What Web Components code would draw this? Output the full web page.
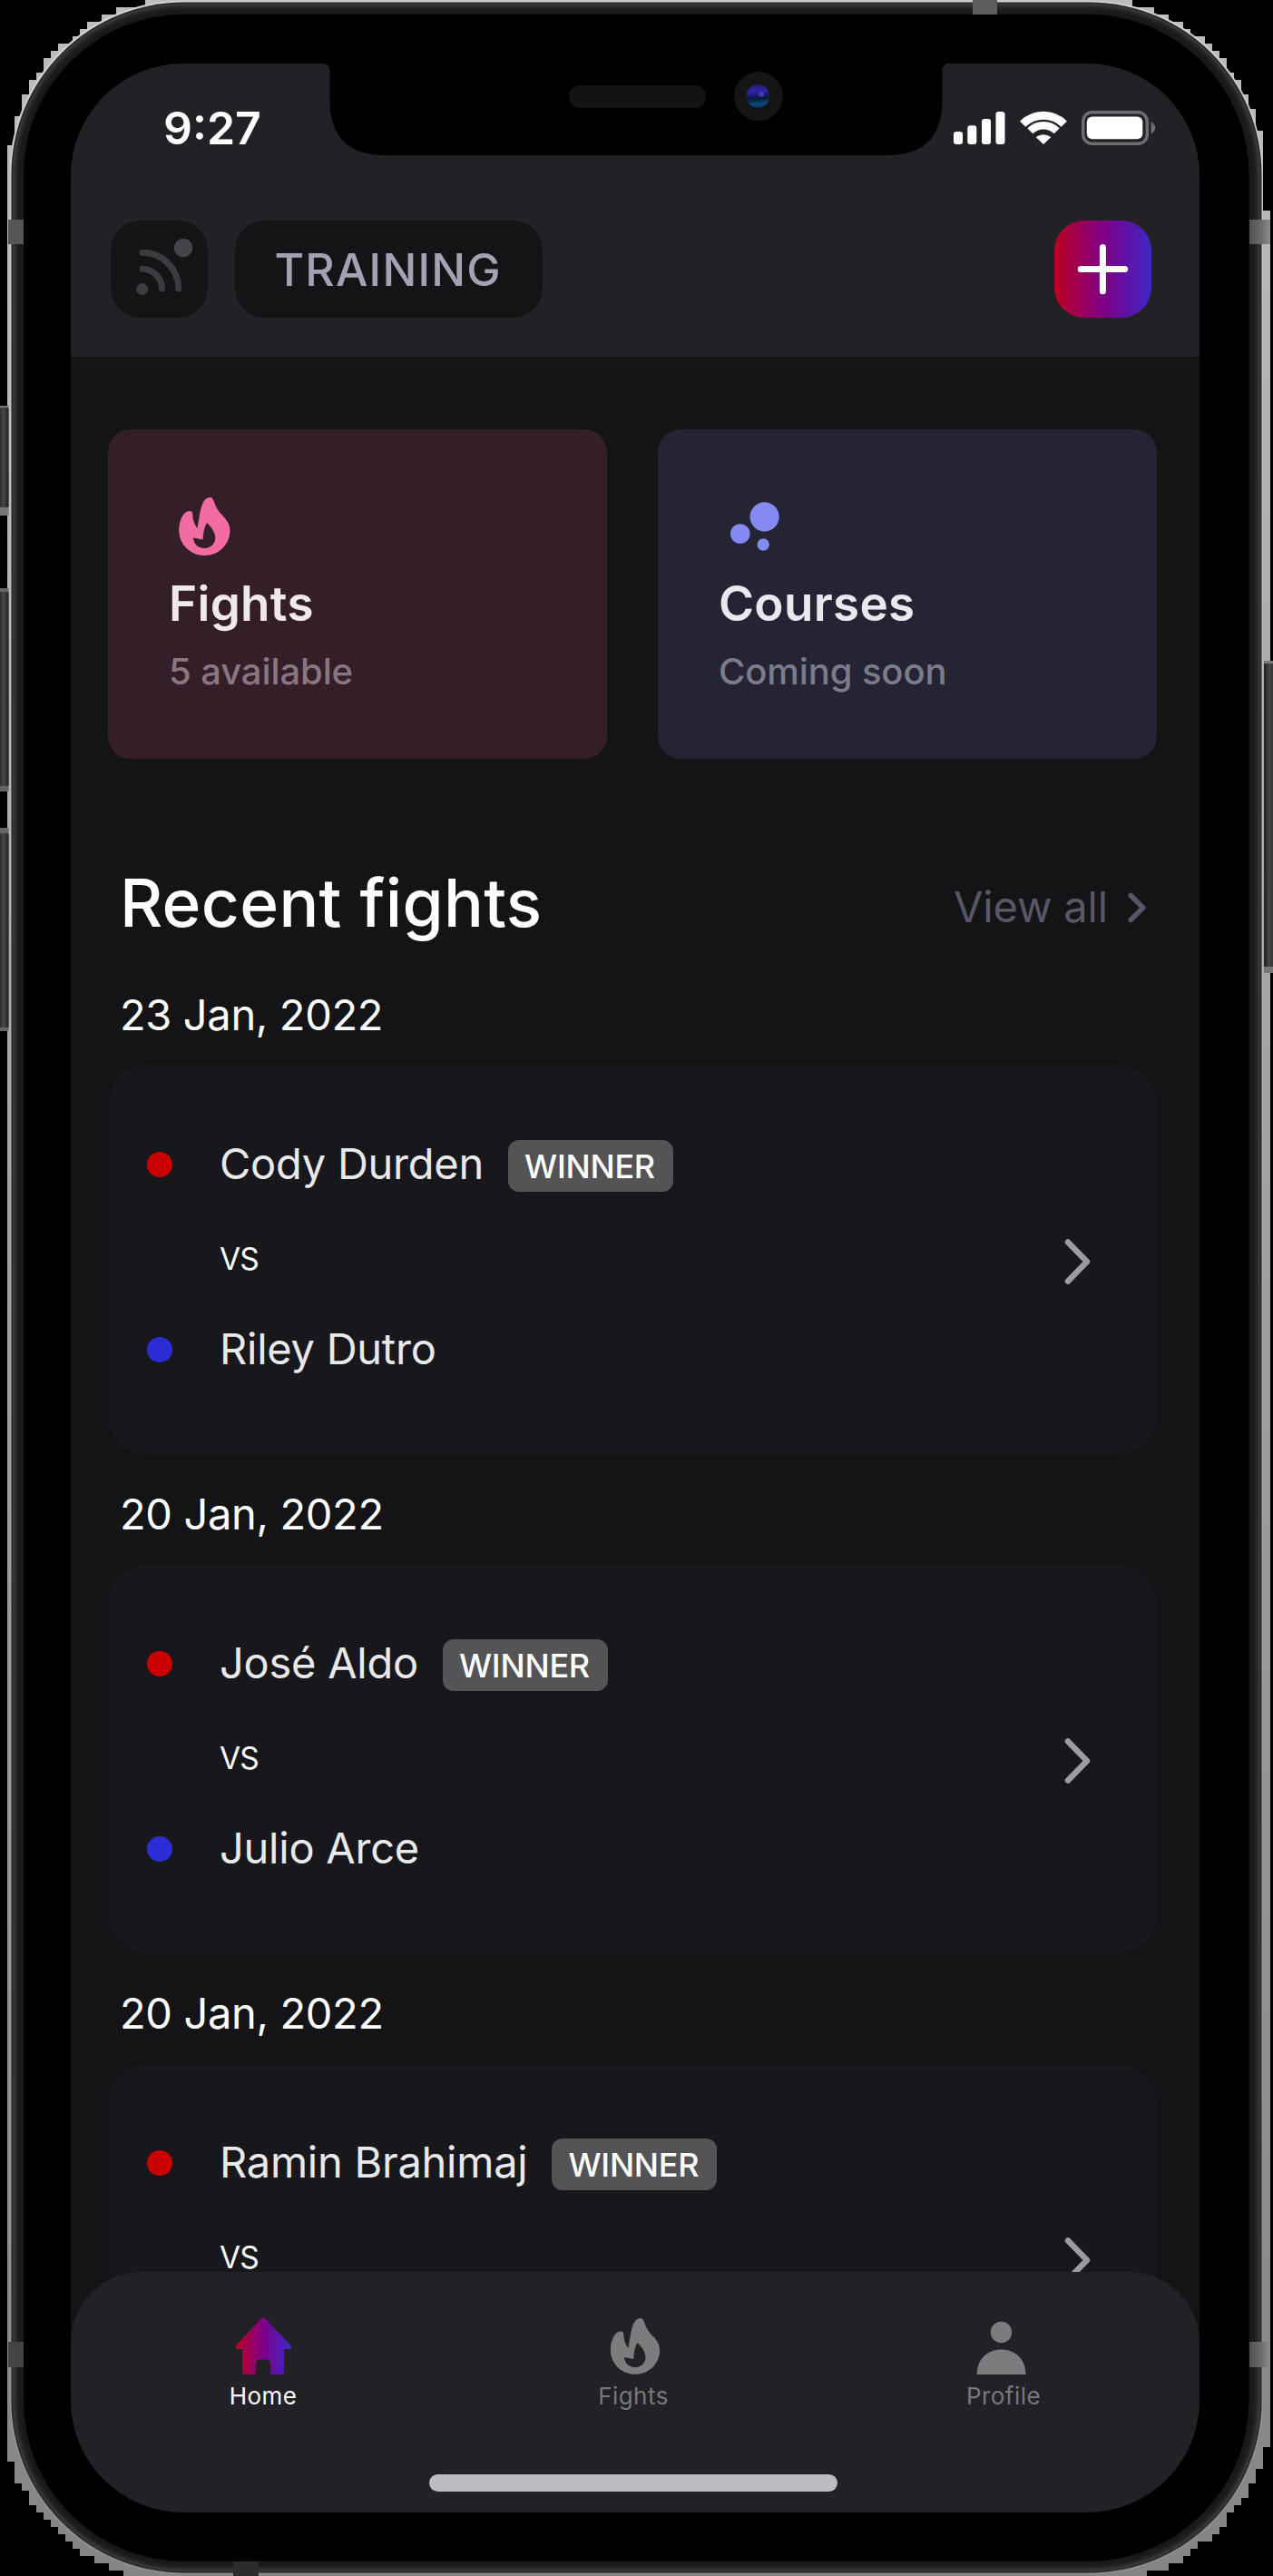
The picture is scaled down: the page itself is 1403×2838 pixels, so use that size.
<!DOCTYPE html>
<html lang="en">
<head>
<meta charset="utf-8">
<title>Training</title>
<style>
html,body{margin:0;padding:0;background:#000}
body{width:1403px;height:2838px;overflow:hidden;font-family:Inter,"Liberation Sans",sans-serif;color:#fff}
</style>
</head>
<body>
<phone-frame>
  <app-header>
    <status-bar slot="status" time="9:27"></status-bar>
    TRAINING
  </app-header>
  <main-feed>
    <promo-card slot="promo" kind="fights"><span slot="title">Fights</span><span slot="note">5 available</span></promo-card>
    <promo-card slot="promo" kind="courses"><span slot="title">Courses</span><span slot="note">Coming soon</span></promo-card>
    <section-head link="View all">Recent fights</section-head>
    <fight-entry date="23 Jan, 2022"><span slot="red">Cody Durden</span><span slot="blue">Riley Dutro</span></fight-entry>
    <fight-entry date="20 Jan, 2022"><span slot="red">José Aldo</span><span slot="blue">Julio Arce</span></fight-entry>
    <fight-entry date="20 Jan, 2022"><span slot="red">Ramin Brahimaj</span><span slot="blue"></span></fight-entry>
  </main-feed>
  <tab-bar>
    <tab-item icon="home" active>Home</tab-item>
    <tab-item icon="flame">Fights</tab-item>
    <tab-item icon="profile">Profile</tab-item>
  </tab-bar>
</phone-frame>

<script>
const FLAME = '<path fill-rule="evenodd" d="M32.5 47C35.5 33 36 13 46.5 13C51.5 13 50 20 56 28C61 35 68.5 39 68.5 49.5C68.5 65 56 77 40.5 77C25 77 12.3 65 12.3 49C12.3 39 17 28 24 28C28.5 28 27 33 27.8 37C28.8 41.5 30.5 44.5 32.5 47ZM43 41C40 46 39 52 38.5 59.5L28 57.5C28.5 64.5 33.5 69 40.5 69C47 69 52.3 64 52.3 57.5C52.3 49 43 41 43 41Z"/>';

function define(name, html, setup) {
  customElements.define(name, class extends HTMLElement {
    connectedCallback() {
      if (this.shadowRoot) return;
      const root = this.attachShadow({ mode: 'open' });
      root.innerHTML = typeof html === 'function' ? html(this) : html;
      if (setup) setup(this, root);
    }
  });
}

/* Stepped halo around the device body, as [x, y] corners of 8px blocks */
function haloPath() {
  const tl = [[160,0],[128,8],[112,16],[96,24],[88,32],[80,40],[64,48],[56,56],[48,64],[40,80],[32,88],[24,104],[16,128],[8,160]];
  const bl = [[8,2680],[16,2712],[24,2736],[32,2744],[40,2760],[48,2768],[56,2776],[64,2784],[72,2792],[80,2800],[88,2808],[104,2816],[120,2824],[136,2832],[168,2838]];
  const br = [[1232,2838],[1264,2832],[1288,2824],[1304,2816],[1312,2808],[1320,2800],[1336,2792],[1344,2784],[1352,2768],[1360,2760],[1368,2752],[1376,2736],[1384,2720],[1392,2696],[1400,2608]];
  const tr = [[1400,232],[1392,144],[1384,120],[1376,104],[1368,88],[1360,80],[1352,64],[1344,56],[1336,48],[1328,40],[1312,32],[1304,24],[1288,16],[1272,8],[1248,0]];
  let p = 'M160 0';
  for (const [x, y] of tl) p += `V${y}H${x}`;
  for (const [x, y] of bl) p += `V${y}H${x}`;
  for (const [x, y] of br) p += `H${x}V${y}`;
  for (const [x, y] of tr) p += `H${x}V${y}`;
  return p + 'Z';
}

function bezel() {
  let rings = '';
  const shades = ['#222','#333','#3a3a3a','#333','#2c2c2c','#262626','#222','#1f1f1f','#1d1d1d','#1b1b1b','#1a1a1a','#1a1a1a','#191919'];
  shades.forEach((c, i) => {
    rings += `<rect x="${12.5 + i}" y="${2.5 + i}" width="${1378 - 2 * i}" height="${2832 - 2 * i}" rx="${190 - i}" fill="${c}"/>`;
  });
  const side = (x, y, w, h) => `<rect x="${x}" y="${y}" width="${w}" height="${h}" rx="1.5" fill="url(#key)"/>`;
  return `<svg width="1403" height="2838" viewBox="0 0 1403 2838" aria-hidden="true">
  <defs>
    <linearGradient id="metal" x1="0" y1="0" x2="0" y2="1"><stop offset="0" stop-color="#bcbcbc"/><stop offset=".45" stop-color="#a2a2a2"/><stop offset="1" stop-color="#858585"/></linearGradient>
    <linearGradient id="rim" x1="0" y1="0" x2="0" y2="1"><stop offset="0" stop-color="#d0d0d0"/><stop offset=".4" stop-color="#b0b0b0"/><stop offset="1" stop-color="#8c8c8c"/></linearGradient>
    <linearGradient id="key" x1="0" x2="1"><stop offset="0" stop-color="#2e2e2e"/><stop offset=".4" stop-color="#484848"/><stop offset="1" stop-color="#222"/></linearGradient>
    <linearGradient id="keyr" x1="0" x2="1"><stop offset="0" stop-color="#1c1c1c"/><stop offset=".6" stop-color="#484848"/><stop offset="1" stop-color="#333"/></linearGradient>
    <linearGradient id="band" x1="0" x2="1"><stop offset="0" stop-color="#505050"/><stop offset=".5" stop-color="#686868"/><stop offset="1" stop-color="#8c8c8c"/></linearGradient>
  </defs>
  <path d="${haloPath()}" fill="url(#metal)"/>
  <rect x="10.5" y=".5" width="1381.5" height="2836" rx="191" fill="url(#rim)"/>
  ${rings}
  <rect x="26" y="15.8" width="1350.5" height="2806" rx="177" fill="#000"/>
  <rect x="9" y="242" width="17" height="27" fill="#555"/><rect x="9" y="2580" width="17" height="28" fill="#444"/>
  <rect x="1377" y="242" width="23" height="27" fill="url(#band)"/><rect x="1377" y="2580" width="23" height="28" fill="url(#band)"/>
  <rect x="1072" y="0" width="27" height="16" fill="#5c5c5c"/><rect x="257" y="2822" width="28" height="16" fill="#2c2c2c"/>
  <rect x="0" y="447" width="9.5" height="121" fill="#777"/><rect x="0" y="648" width="9.5" height="224" fill="#666"/><rect x="0" y="912" width="9.5" height="224" fill="#666"/>
  ${side(0,449,9.5,110)}${side(0,652,9.5,214)}${side(0,918,9.5,214)}
  <rect x="1393" y="728" width="10" height="344" fill="#777"/>
  <rect x="1393" y="731" width="10" height="334" fill="url(#keyr)"/>
</svg>`;
}

define('phone-frame', () => `
<style>
:host{display:block;position:relative;box-sizing:border-box;width:1403px;height:2838px;padding:70px 81px 70px 78px;background:#000}
.bezel,.notch{position:absolute;left:0;top:0;display:block}
.bezel svg,.notch svg{display:block}
.screen{position:relative;height:2698px;border-radius:124px;overflow:hidden;background:#141416;display:flex;flex-direction:column}
</style>
<div class="bezel">${bezel()}</div>
<div class="screen"><slot></slot></div>
<div class="notch"><svg width="1403" height="180" viewBox="0 0 1403 180">
  <defs><linearGradient id="eye" x1=".3" y1="0" x2=".4" y2="1"><stop offset="0" stop-color="#1f1a80"/><stop offset=".3" stop-color="#3026a8"/><stop offset=".5" stop-color="#1a1468"/><stop offset=".62" stop-color="#061c30"/><stop offset=".85" stop-color="#0a4a7c"/><stop offset="1" stop-color="#08306a"/></linearGradient></defs>
  <path d="M355 69H1046V70Q1038.5 70 1038.5 78V110Q1038.5 171 978 171H424Q363.5 171 363.5 110V78Q363.5 70 355 70Z" fill="#000"/>
  <rect x="627" y="94" width="151" height="25" rx="12" fill="#131313"/>
  <circle cx="836" cy="106" r="27" fill="#151515"/>
  <circle cx="835.5" cy="106" r="12.7" fill="url(#eye)"/><circle cx="839" cy="104" r="3" fill="#5b50d8" opacity=".6"/>
</svg></div>`);

define('status-bar', el => `
<style>
:host{display:flex;align-items:center;justify-content:space-between;height:141px;padding:0 42px 0 102px}
time{font-size:50px;line-height:60px;font-weight:570;color:#fff}
svg{display:block}
</style>
<time>${el.getAttribute('time')}</time>
<svg width="240" height="60" viewBox="0 0 240 60" fill="#fff">
  <rect x="11" y="34" width="10" height="14" rx="3"/><rect x="26.3" y="27.3" width="10" height="20.7" rx="3"/><rect x="42" y="20" width="10" height="28" rx="3"/><rect x="57.5" y="12" width="10" height="36" rx="3"/>
  <g fill="none" stroke="#fff"><path d="M87.2 25.600A32.300 32.300 0 0 1 132.800 25.600" stroke-width="9"/><path d="M95.300 33.300A20.800 20.800 0 0 1 124.700 33.300" stroke-width="8.500"/></g>
  <path d="M110 48L101.600 40Q110 34.500 118.400 40Z"/>
  <rect x="153.700" y="12.700" width="70.600" height="34.600" rx="10" fill="none" stroke="#6e6e72" stroke-width="3.400"/>
  <rect x="157.800" y="17.500" width="61.500" height="24.800" rx="6"/>
  <path d="M228.600 23Q233.400 26 233.400 29.800T228.600 36.600Z" fill="#6e6e72"/>
</svg>`);

define('app-header', `
<style>
:host{display:block;flex:none;height:323px;background:#222226}
.row{display:flex;align-items:center;margin-top:32px;padding:0 53px 0 44px;height:107px}
.feed,.add{width:107px;height:107px;border-radius:33px;background:#141416}
.feed svg,.add svg{display:block}
.pill{margin-left:30px;height:107px;width:339px;border-radius:33px;background:#141416;color:#a4a1b5;font-size:50px;line-height:109px;font-weight:480;letter-spacing:1.2px;box-sizing:border-box;padding-left:43.5px;white-space:nowrap}
.add{margin-left:auto;background:linear-gradient(90deg,#bc0022,#7f0085 50%,#3e26c8)}
</style>
<slot name="status"></slot>
<div class="row">
  <div class="feed"><svg width="107" height="107" viewBox="0 0 107 107"><circle cx="34.7" cy="75.5" r="6.5" fill="#3c3c40"/><g fill="none" stroke="#3c3c40" stroke-width="7" stroke-linecap="round"><path d="M35 53.2A21.8 21.8 0 0 1 56.5 75"/><path d="M35 35.3A39.8 39.8 0 0 1 74.8 75"/></g><circle cx="80" cy="30" r="10.3" fill="#454549"/></svg></div>
  <div class="pill"><slot></slot></div>
  <div class="add"><svg width="107" height="107" viewBox="0 0 107 107" stroke="#fff" stroke-width="7" stroke-linecap="round"><path d="M29.2 53.5H77.6M53.4 29.5V77.8"/></svg></div>
</div>`);

define('main-feed', `
<style>
:host{display:block;flex:1;min-height:0;overflow:hidden;padding:80px 47px 0 41px;background:#141416}
.promos{display:flex;gap:56px}
</style>
<div class="promos"><slot name="promo"></slot></div>
<slot></slot>`);

define('promo-card', el => `
<style>
:host{display:block;box-sizing:border-box;flex:1;height:363px;border-radius:25px;padding:62px 0 0 66px;background:#341f29;--icon:#f26ba1;--note:#897680;--title:#efe9ed}
:host([kind=courses]){background:#242435;--icon:#858af2;--note:#7b7b8a;--title:#e9e9ed}
svg{display:block;fill:var(--icon)}
h2,p{margin:0;padding-left:1px;white-space:nowrap}
h2{margin-top:16px;font-size:53px;line-height:60px;font-weight:590;letter-spacing:.3px;color:var(--title)}
p{margin-top:20px;font-size:40px;line-height:49px;font-weight:450;letter-spacing:-.1px;color:var(--note)}
</style>
<svg width="84" height="84" viewBox="0 0 84 84">${el.getAttribute('kind') === 'fights' ? FLAME : '<circle cx="51.6" cy="34.3" r="16.1"/><circle cx="24.8" cy="53" r="10.8"/><circle cx="50.2" cy="65" r="6.7"/>'}</svg>
<h2><slot name="title"></slot></h2>
<p><slot name="note"></slot></p>`);

define('section-head', el => `
<style>
:host{display:flex;align-items:center;justify-content:space-between;height:88px;margin-top:115px;padding:0 12px 0 13px}
h1{margin:0;font-size:73px;line-height:88px;font-weight:500;letter-spacing:.3px;color:#fff}
a{display:flex;align-items:center;gap:22px;padding-top:8px;font-size:47px;font-weight:370;line-height:60px;letter-spacing:-.15px;color:#585766}
svg{display:block;margin-top:2px}
</style>
<h1><slot></slot></h1>
<a><span>${el.getAttribute('link')}</span><svg width="20" height="34" viewBox="0 0 20 34" fill="none" stroke="#585766" stroke-width="5.5" stroke-linecap="round" stroke-linejoin="round"><path d="M3.2 3.5L16.8 17L3.2 30.5"/></svg></a>`);

define('win-badge', `
<style>
:host{display:block;box-sizing:border-box;width:182px;height:57px;border-radius:12px;padding-right:2px;background:#545457;color:#fff;font-size:36px;font-weight:500;line-height:59px;text-align:center}
</style><slot></slot>`);

define('fight-entry', el => `
<style>
:host{display:block}
.date{margin:49px 0 26px;padding-left:13px;font-size:47px;line-height:60px;font-weight:390;letter-spacing:-.35px;color:#fff}
.card{display:flex;align-items:center;justify-content:space-between;box-sizing:border-box;height:428px;border-radius:44px;background:#18181c;padding:0 73px 0 43px}
.side{display:flex;align-items:center;height:60px;font-size:47px;line-height:60px;font-weight:380;letter-spacing:-.25px;color:#e9e9ec;white-space:nowrap}
.dot{width:28px;height:28px;border-radius:50%;background:#c80000;margin:2px 52px 0 0}
.dot.b{background:#2c2cd6}
.vs{margin:53px 0 47px 80px;font-size:33.5px;line-height:44px;letter-spacing:-.8px;color:#fff}
win-badge{margin:5px 0 0 27px}
.pair{padding-bottom:8px}
svg{display:block;margin-top:4px}
</style>
<div class="date">${el.getAttribute('date')}</div>
<div class="card">
  <div class="pair">
    <div class="side"><i class="dot"></i><slot name="red"></slot><win-badge>WINNER</win-badge></div>
    <div class="vs">VS</div>
    <div class="side"><i class="dot b"></i><slot name="blue"></slot></div>
  </div>
  <svg width="30" height="52" viewBox="0 0 30 52" fill="none" stroke="#9c9ca0" stroke-width="6.5" stroke-linecap="round" stroke-linejoin="round"><path d="M5 4.5L26 26L5 47.5"/></svg>
</div>`, (el, root) => {
  if (el.previousElementSibling && el.previousElementSibling.localName === 'fight-entry')
    root.querySelector('.date').style.marginTop = '36px';
});

define('tab-bar', `
<style>
:host{display:block;position:relative;flex:none;box-sizing:border-box;height:265px;margin-top:-90px;padding:42px 12px 0 8px;border-radius:78px 78px 0 0;background:#222226}
nav{display:flex}
.grip{width:450px;height:19px;border-radius:10px;background:#bdbcc0;margin:71px auto 0}
</style>
<nav><slot></slot></nav><div class="grip"></div>`);

const TAB_ICONS = {
  home: '<defs><linearGradient id="g" x1="9" x2="71" gradientUnits="userSpaceOnUse"><stop stop-color="#c00020"/><stop offset=".5" stop-color="#7f0088"/><stop offset="1" stop-color="#3a28cc"/></linearGradient></defs><path fill="url(#g)" d="M40 8.3Q41.5 8.3 43 10L70 38.5Q73 43 69 43H63V68Q63 71 60 71H51Q48 71 48 68V60Q48 54.5 43.5 54.5H36.5Q32 54.5 32 60V68Q32 71 29 71H20Q17 71 17 68V43H12.5Q8.5 43 10.5 38.5L37 10Q38.5 8.3 40 8.3Z"/>',
  flame: '<g transform="translate(3 -3.5) scale(.965)">' + FLAME + '</g>',
  profile: '<circle cx="37.5" cy="24.5" r="11.7"/><path d="M10.7 71C10.7 54 22 43.5 37.5 43.5S64.500 54 64.5 71Z"/>'
};
define('tab-item', el => `
<style>
:host{display:flex;flex:1;flex-direction:column;align-items:center;color:#77777b;font-size:26px;line-height:30px;letter-spacing:.45px}
:host([active]){color:#fff}
svg{display:block;fill:#7c7c7e}
</style>
<svg width="80" height="80" viewBox="0 0 80 80">${TAB_ICONS[el.getAttribute('icon')]}</svg>
<span><slot></slot></span>`);
</script>
</body>
</html>
